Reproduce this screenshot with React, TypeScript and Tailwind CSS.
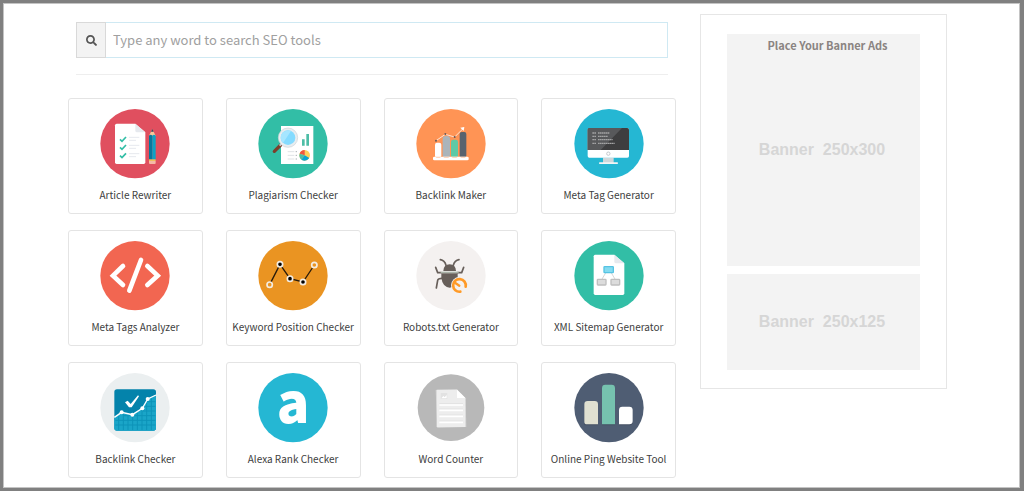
import React, { useState } from "react";
import { FaSearch } from "react-icons/fa";

type Tool = {
  name: string;
  slug: string;
  icon: React.ReactNode;
};

// ── Icon badge ──────────────────────────────────────────────────────────────
function Badge({
  color,
  r = 104,
  children,
}: {
  color: string;
  r?: number;
  children: React.ReactNode;
}) {
  return (
    <svg
      viewBox="0 0 210 210"
      className="w-[70px] h-[70px] overflow-visible"
      aria-hidden="true"
    >
      <circle cx="105" cy="104" r={r} fill={color} />
      {children}
    </svg>
  );
}

// ── Icons ───────────────────────────────────────────────────────────────────
const articleIcon = (
  <Badge color="#e04f5f">
    <path d="M50 44h56l30 26v90q0 5-5 5H50q-5 0-5-5V49q0-5 5-5z" fill="#fff" />
    <path d="M106 44l30 26h-25q-5 0-5-5z" fill="#e6e9ee" />
    <g fill="none" stroke="#32bea6" strokeWidth="5">
      <path d="M60 91l6 6 12-13" />
      <path d="M60 115l6 6 12-13" />
      <path d="M60 140l6 6 12-13" />
    </g>
    <path
      d="M87 85h31M87 94h21M87 109h31M87 118h21M87 134h31M87 143h21"
      stroke="#e6e9ee"
      strokeWidth="3"
    />
    <path d="M147 80l10-19 10 19z" fill="#f6c79a" />
    <path d="M153 68l4-8 4 8z" fill="#324a5e" />
    <path d="M147 80q5-5 10 0v72h-10z" fill="#08789c" />
    <path d="M157 80q5-5 10 0v72h-10z" fill="#0ba4c6" />
    <path d="M147 151h20v5h-20z" fill="#f0c05a" />
    <path d="M147 156h20v6q0 3-3 3h-14q-3 0-3-3z" fill="#f5b9a6" />
  </Badge>
);

const plagiarismIcon = (
  <Badge color="#32bea6">
    <path d="M69 51h97v114H69z" fill="#fff" />
    <path d="M132 91h8v19h-8zM145 75h8v35h-8z" fill="#4dbda6" />
    <path
      d="M89 128h20M89 139h20M89 150h20"
      stroke="#dfe3e6"
      strokeWidth="3"
    />
    <path
      d="M113 128h4M113 139h4M113 150h4"
      stroke="#a9b0b5"
      strokeWidth="3"
    />
    <circle cx="140" cy="139" r="16" fill="#ffd05b" />
    <path d="M140 139l-15-5q3-11 15-11z" fill="#f15540" />
    <path d="M140 139l-15-5q-3 10 5 18z" fill="#4dbda6" />
    <path d="M140 139l-10 13q14 8 24-5z" fill="#0ba4d2" />
    <path d="M68 108L49 127" stroke="#7b3f2b" strokeWidth="10" strokeLinecap="round" />
    <path d="M71 104l-6 6" stroke="#c9ced1" strokeWidth="6" />
    <circle cx="90" cy="86" r="29" fill="#e8edf0" stroke="#ccd3d8" strokeWidth="2" />
    <circle cx="90" cy="86" r="22" fill="#84dbff" />
    <path d="M75 102a22 22 0 0 1 0-32q12-8 24-4z" fill="#a6e6ff" />
  </Badge>
);

const backlinkMakerIcon = (
  <Badge color="#ff9455">
    <rect x="57" y="101" width="19" height="45" rx="6" fill="#fff" />
    <rect x="80" y="81" width="22" height="65" rx="8" fill="#abb4ba" />
    <rect x="105" y="92" width="21" height="54" rx="7" fill="#5ec9a6" />
    <rect x="131" y="69" width="20" height="77" rx="6" fill="#59636e" />
    <rect x="51" y="143" width="107" height="11" rx="4" fill="#fff" />
    <path
      d="M57 143h19q-9 7-19 0zM80 143h22q-11 7-22 0zM105 143h21q-10 7-21 0zM131 143h20q-10 7-20 0z"
      fill="#ffc9a8"
    />
    <path d="M60 95l28-19 28 8 25-25" fill="none" stroke="#ffe4d2" strokeWidth="3" />
    <path d="M133 56l12-2-2 12z" fill="#fff" />
    <g fill="#6b5a55">
      <circle cx="60" cy="95" r="3" />
      <circle cx="88" cy="75" r="3" />
      <circle cx="116" cy="84" r="3" />
    </g>
  </Badge>
);

const metaTagIcon = (
  <Badge color="#25b7d3">
    <path d="M87 146h32v16H87z" fill="#cfd8db" />
    <rect x="75" y="160" width="57" height="5" rx="2" fill="#f2f5f6" />
    <rect x="41" y="57" width="124" height="89" rx="5" fill="#fff" />
    <path d="M46 57h114q5 0 5 5v61H41V62q0-5 5-5z" fill="#3e3e3f" />
    <path d="M46 57h98l-64 66H41V62q0-5 5-5z" fill="#58595b" />
    <g stroke="#a3a3a4" strokeWidth="4">
      <path d="M55 72h11M72 72h34" strokeDasharray="5 1" />
      <path d="M55 82h11M72 82h30" strokeDasharray="5 1" />
      <path d="M55 92h11M72 92h44" strokeDasharray="5 1" />
      <path d="M55 103h11M72 103h50" strokeDasharray="5 1" />
    </g>
    <circle cx="103" cy="134" r="5" fill="#fff" stroke="#c3c9cc" strokeWidth="3" />
  </Badge>
);

const codeIcon = (
  <Badge color="#f26651">
    <path
      d="M69 75L39 104l30 28M142 75l31 29-31 28M123 57L88 149"
      fill="none"
      stroke="#fff"
      strokeWidth="14"
      strokeLinecap="round"
      strokeLinejoin="miter"
    />
  </Badge>
);

const keywordIcon = (
  <Badge color="#ea9422">
    <path
      d="M35 131l31-61 30 43 39 10 34-51"
      fill="none"
      stroke="#2a1c0a"
      strokeWidth="4"
    />
    <g stroke="#f3ece2" strokeWidth="5">
      <circle cx="35" cy="131" r="8" fill="#ea9422" />
      <circle cx="66" cy="70" r="8" fill="#000" />
      <circle cx="96" cy="113" r="8" fill="#000" />
      <circle cx="135" cy="123" r="8" fill="#000" />
      <circle cx="169" cy="72" r="8" fill="#ea9422" />
    </g>
  </Badge>
);

const robotsIcon = (
  <Badge color="#f4f1f0">
    <path d="M82 90q1-20 19-20t19 20z" fill="#675f5a" />
    <path d="M76 97h49v12q-2 29-24 31-22-2-25-31z" fill="#675f5a" />
    <g fill="none" stroke="#675f5a" strokeWidth="5" strokeLinecap="round">
      <path d="M90 73q-4-15-17-17M112 73q4-15 17-17" />
      <path d="M59 79l6 16h10M143 79l-6 16h-12" strokeLinejoin="round" />
      <path d="M79 112q-13 0-14 6l-4 23" />
    </g>
    <path d="M74 94h54" stroke="#a9b3a8" strokeWidth="4" />
    <circle cx="130" cy="133" r="25" fill="#f4f1f0" />
    <path
      d="M149 137a19 19 0 1 0-16 15"
      fill="none"
      stroke="#ff9a27"
      strokeWidth="8"
      strokeLinecap="round"
    />
    <path d="M118 126l12 8" stroke="#ff9a27" strokeWidth="7" strokeLinecap="round" />
  </Badge>
);

const sitemapIcon = (
  <Badge color="#32bea6">
    <path d="M64 41h57l30 26v90q0 5-5 5H64q-5 0-5-5V46q0-5 5-5z" fill="#fff" />
    <path d="M121 41l30 26h-25q-5 0-5-5z" fill="#e6e9ee" />
    <path d="M96 94L83 116M111 94l13 22" stroke="#d6d6d6" strokeWidth="3" />
    <rect x="90" y="77" width="28" height="18" rx="2" fill="#84dbf0" stroke="#55c3e3" strokeWidth="4" />
    <rect x="70" y="115" width="26" height="17" rx="2" fill="#dcdcdc" stroke="#bfbfbf" strokeWidth="4" />
    <rect x="111" y="115" width="26" height="17" rx="2" fill="#dcdcdc" stroke="#bfbfbf" strokeWidth="4" />
  </Badge>
);

const backlinkCheckerIcon = (
  <Badge color="#ebeff0">
    <rect x="43" y="49" width="125" height="124" rx="8" fill="#0483ab" />
    <path
      d="M43 133l22-15 32 7 30-19 16-28 25-12v99q0 8-8 8H51q-8 0-8-8z"
      fill="#1aa5c8"
    />
    <path
      d="M46 142h120M46 156h120M70 128h96M128 114h38M134 100h32M142 86h24M56 128v43M70 122v49M84 126v45M98 128v43M112 120v51M126 110v61M140 90v81M154 76v95"
      stroke="#0d93b8"
      strokeWidth="3"
    />
    <path d="M43 133l22-15 32 7 30-19 16-28 25-12" fill="none" stroke="#fff" strokeWidth="4" />
    <g fill="#fff">
      <circle cx="65" cy="118" r="6" />
      <circle cx="97" cy="125" r="6" />
      <circle cx="127" cy="106" r="6" />
      <circle cx="143" cy="78" r="6" />
    </g>
    <path d="M75 88l8-5 9 10 22-26 3 3-22 33h-8z" fill="#fff" />
  </Badge>
);

const alexaIcon = (
  <Badge color="#25b7d3">
    <text
      x="105"
      y="151"
      textAnchor="middle"
      fontSize="162"
      fontWeight="900"
      fill="#fff"
      fontFamily="'Noto Sans CJK SC', sans-serif"
    >
      a
    </text>
  </Badge>
);

const wordIcon = (
  <Badge color="#b8b8b8" r={100}>
    <path d="M59 51l64-2 26 27 2 86-87 3z" fill="#d2d2d2" />
    <path d="M62 50h61l25 25v87H62z" fill="#ededed" />
    <path d="M123 50l25 25h-25z" fill="#fff" />
    <path d="M74 60h20v18H74z" fill="#e2e2e2" />
    <path d="M76 76l6-7 4 4 6-7v10z" fill="#fff" />
    <path
      d="M70 92h71M70 108h71M70 126h71M70 144h71"
      stroke="#e2e2e2"
      strokeWidth="3"
    />
    <path d="M70 96h71M70 112h71M70 130h71M70 148h71" stroke="#fff" strokeWidth="5" />
  </Badge>
);

const pingIcon = (
  <Badge color="#4f5d73">
    <path
      d="M31 157V96q0-9 9-9h23q9 0 9 9v61zM84 157V47q0-9 9-9h21q9 0 9 9v110zM135 157v-44q0-9 9-9h23q9 0 9 9v35q0 9-9 9z"
      fill="#434f62"
    />
    <path d="M31 154V94q0-10 10-10h21q10 0 10 10v60H39q-8 0-8-8z" fill="#e0e0d1" />
    <path d="M84 154V45q0-10 10-10h19q10 0 10 10v109z" fill="#76c2af" />
    <path d="M135 154v-43q0-10 10-10h21q10 0 10 10v33q0 10-10 10z" fill="#fff" />
  </Badge>
);

const TOOLS: Tool[] = [
  { name: "Article Rewriter", slug: "article-rewriter", icon: articleIcon },
  { name: "Plagiarism Checker", slug: "plagiarism-checker", icon: plagiarismIcon },
  { name: "Backlink Maker", slug: "backlink-maker", icon: backlinkMakerIcon },
  { name: "Meta Tag Generator", slug: "meta-tag-generator", icon: metaTagIcon },
  { name: "Meta Tags Analyzer", slug: "meta-tags-analyzer", icon: codeIcon },
  { name: "Keyword Position Checker", slug: "keyword-position-checker", icon: keywordIcon },
  { name: "Robots.txt Generator", slug: "robots-txt-generator", icon: robotsIcon },
  { name: "XML Sitemap Generator", slug: "xml-sitemap-generator", icon: sitemapIcon },
  { name: "Backlink Checker", slug: "backlink-checker", icon: backlinkCheckerIcon },
  { name: "Alexa Rank Checker", slug: "alexa-rank-checker", icon: alexaIcon },
  { name: "Word Counter", slug: "word-counter", icon: wordIcon },
  { name: "Online Ping Website Tool", slug: "online-ping-website-tool", icon: pingIcon },
];

export default function App() {
  const [query, setQuery] = useState("");

  const visibleTools = TOOLS.filter((tool) =>
    tool.name.toLowerCase().includes(query.trim().toLowerCase()),
  );

  return (
    <div className="min-h-screen flex bg-[#808080] py-[3px] pl-[3px] pr-1 font-['Noto_Sans_CJK_SC',sans-serif]">
      <div className="flex-1 flex flex-wrap md:flex-nowrap items-start gap-6 border border-[#c4c4c4] bg-white pt-[10px] pb-[9px] pl-16 pr-[72px]">
        {/* Search and tools */}
        <main className="flex-1 min-w-0 pt-2">
          <div className="px-2">
            <form
              role="search"
              onSubmit={(e) => e.preventDefault()}
              className="flex h-9"
            >
              <label
                htmlFor="tool-search"
                aria-label="Search SEO tools"
                className="flex w-[30px] items-center justify-center border border-[#d9d9d9] bg-[#f3f3f3] text-[#555]"
              >
                <FaSearch className="w-[11px] h-[11px]" />
              </label>
              <input
                id="tool-search"
                type="text"
                value={query}
                onChange={(e) => setQuery(e.target.value)}
                placeholder="Type any word to search SEO tools"
                className="flex-1 min-w-0 border border-l-0 border-[#cfe9f3] px-[7px] text-[13px] text-[#555] placeholder:text-[#a0a0a0] outline-none"
              />
            </form>
            <hr className="mt-4 mb-[23px] border-[#eee]" />
          </div>

          <div className="grid grid-cols-2 sm:grid-cols-4 gap-x-[23px] gap-y-4">
            {visibleTools.map((tool) => (
              <a
                key={tool.slug}
                href={`#${tool.slug}`}
                className="flex flex-col items-center rounded-[3px] border border-[#e4e4e4] pt-[10px] pb-2 text-[10px] leading-5 text-[#404040] hover:border-[#cfe9f3]"
              >
                {tool.icon}
                <span className="mt-[6px] whitespace-nowrap">{tool.name}</span>
              </a>
            ))}
          </div>
        </main>

        {/* Banner ads */}
        <aside className="w-[247px] flex flex-col gap-2 border border-[#e6e6e6] px-[26px] pt-[19px] pb-[18px] font-bold">
          <div className="relative flex aspect-[5/6] items-center justify-center bg-[#f3f3f3]">
            <h2 className="absolute inset-x-0 top-0 pl-2 text-center text-[11px] leading-[22px] text-[#8a8482]">
              Place Your Banner Ads
            </h2>
            <p className="pr-[3px] whitespace-pre font-['Liberation_Sans',sans-serif] text-base text-[#d6d6d6]">
              {"Banner  250x300"}
            </p>
          </div>
          <div className="flex aspect-[2/1] items-center justify-center bg-[#f3f3f3]">
            <p className="pr-[3px] whitespace-pre font-['Liberation_Sans',sans-serif] text-base text-[#d6d6d6]">
              {"Banner  250x125"}
            </p>
          </div>
        </aside>
      </div>
    </div>
  );
}
